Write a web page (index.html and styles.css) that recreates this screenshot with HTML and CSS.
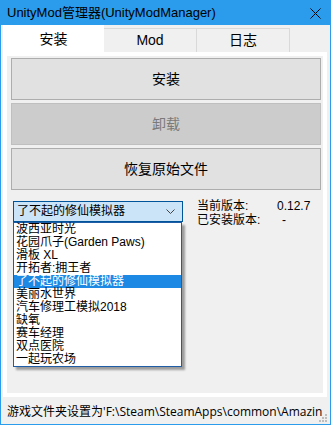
FILE: index.html
```html
<!DOCTYPE html>
<html>
<head>
<meta charset="utf-8" />
<title>UnityMod管理器</title>
<link rel="stylesheet" href="styles.css">
</head>
<body>
<div class="window">
	<div class="titlebar">
		<span class="title">UnityMod管理器(UnityModManager)</span>
		<svg class="close" width="11" height="11" viewBox="0 0 11 11"><path d="M0.5 0.5L10.5 10.5M10.5 0.5L0.5 10.5" stroke="#000" stroke-width="1" fill="none"/></svg>
	</div>
	<div class="tabctl">
		<div class="tabstrip">
			<div class="tab on">安装</div>
			<div class="tab">Mod</div>
			<div class="tab">日志</div>
		</div>
		<div class="tabpage">
			<div class="btn first">安装</div>
			<div class="btn disabled">卸载</div>
			<div class="btn">恢复原始文件</div>
			<div class="row">
				<div class="combo-wrap">
					<div class="combo">
						<span>了不起的修仙模拟器</span>
						<svg class="chev" width="9" height="5" viewBox="0 0 9 5"><path d="M0.5 0.5L4.5 4.5L8.5 0.5" stroke="#444" stroke-width="1" fill="none"/></svg>
					</div>
					<ul class="droplist">
						<li>波西亚时光</li>
						<li>花园爪子(Garden Paws)</li>
						<li>滑板 XL</li>
						<li>开拓者:拥王者</li>
						<li class="sel">了不起的修仙模拟器</li>
						<li>美丽水世界</li>
						<li>汽车修理工模拟2018</li>
						<li>缺氧</li>
						<li>赛车经理</li>
						<li>双点医院</li>
						<li>一起玩农场</li>
					</ul>
				</div>
				<div class="versions">
					<div class="ver"><span class="k">当前版本:</span><span class="v">0.12.7</span></div>
					<div class="ver"><span class="k">已安装版本:</span><span class="v dash">-</span></div>
				</div>
			</div>
		</div>
	</div>
	<div class="status">
		<span class="path">游戏文件夹设置为'F:\Steam\SteamApps\common\Amazin</span>
		<svg class="grip" width="10" height="10" viewBox="0 0 10 10">
			<rect x="7" y="1" width="2" height="2" fill="#bdbdbd"/>
			<rect x="4" y="4" width="2" height="2" fill="#bdbdbd"/>
			<rect x="7" y="4" width="2" height="2" fill="#bdbdbd"/>
			<rect x="1" y="7" width="2" height="2" fill="#bdbdbd"/>
			<rect x="4" y="7" width="2" height="2" fill="#bdbdbd"/>
			<rect x="7" y="7" width="2" height="2" fill="#bdbdbd"/>
		</svg>
	</div>
</div>
</body>
</html>
```

FILE: styles.css
```css
body{ margin:0; background:#fff; font-family:"Liberation Sans","Noto Sans CJK SC",sans-serif; color:#000; }

.window{ width:329px; height:424px; border:1px solid #2b9bec; border-top:0; background:#f0f0f0; display:flex; flex-direction:column; overflow:hidden; }

.titlebar{ height:25px; background:#2b9bec; display:flex; align-items:center; padding-left:6px; flex-shrink:0; }
.titlebar .title{ font-size:13px; line-height:25px; flex:1; white-space:nowrap; }
.titlebar .close{ margin-right:9px; margin-top:1px; }

.tabctl{ padding:1px 0 0 2px; flex-shrink:0; }
.tabstrip{ display:flex; align-items:flex-end; height:26px; }
.tab{ height:23px; width:92px; border:1px solid #d9d9d9; border-bottom:0; background:#f0f0f0; text-align:center; font-size:14px; line-height:23px; margin-left:-1px; }
.tab.on{ height:26px; width:99px; background:#fff; border-color:#fff; line-height:26px; margin-left:0; position:relative; z-index:1; }

.tabpage{ width:316px; height:337px; border:4px solid #fff; background:#f0f0f0; padding:0; }

.btn{ width:308px; height:40px; margin:3px 0 0 4px; border:1px solid #adadad; background:#e1e1e1; text-align:center; font-size:14px; line-height:40px; }
.btn.first{ margin-top:2px; }
.btn.disabled{ background:#cccccc; border-color:#bfbfbf; color:#7a7a7a; }

.row{ display:flex; margin-top:11px; }
.combo-wrap{ position:relative; margin-left:6px; width:170px; }
.combo{ height:19px; border:1px solid #005499; background:#cce4f7; display:flex; align-items:center; padding-left:3px; font-size:12px; line-height:19px; }
.combo span{ flex:1; }
.combo .chev{ margin-right:7px; }

.droplist{ position:absolute; left:0; top:21px; width:167px; margin:0; padding:0; list-style:none; border:1px solid #1f5ea6; background:#fff; box-shadow:3px 3px 2px rgba(0,0,0,0.35); z-index:5; }
.droplist li{ height:13px; line-height:13px; font-size:12px; padding-left:2px; white-space:nowrap; }
.droplist li.sel{ background:#1e88e5; color:#fff; }

.versions{ margin-left:14px; margin-top:-2px; }
.ver{ display:flex; font-size:12px; line-height:14px; }
.ver .k{ width:80px; }
.ver .dash{ padding-left:5px; }

.status{ height:27px; display:flex; align-items:center; position:relative; padding-left:6px; }
.status .path{ font-family:"Open Sans","Noto Sans CJK SC",sans-serif; font-size:12px; white-space:nowrap; }
.status .grip{ position:absolute; right:2px; bottom:1px; }
```
